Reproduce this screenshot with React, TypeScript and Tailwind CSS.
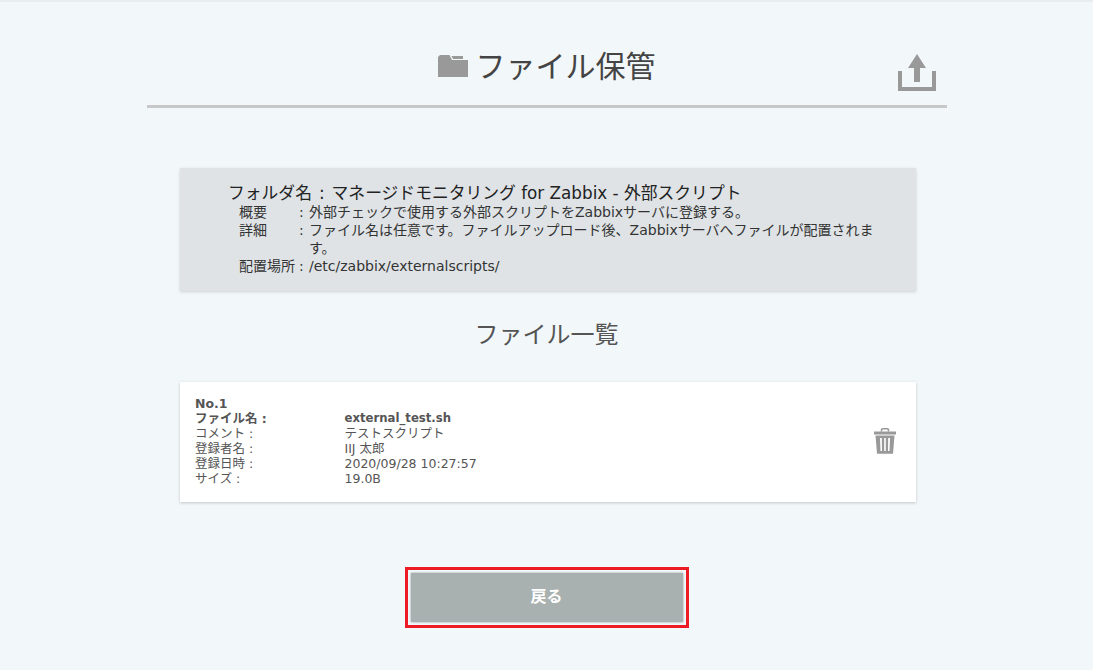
const font = "font-['DejaVu_Sans','Noto_Sans_CJK_JP',sans-serif]";

function Row({ label, value, bold }: { label: string; value: string; bold?: boolean }) {
  return (
    <div className={`flex h-[15px] leading-[15px] ${bold ? "font-bold" : ""}`}>
      <div className="w-[149.5px]">{label}</div>
      <div className={bold ? "text-[11.7px]" : ""}>{value}</div>
    </div>
  );
}

function Info({ label, value }: { label: string; value: string }) {
  return (
    <div className="flex leading-[18px]">
      <div className="w-[60px] shrink-0">{label}</div>
      <div className="w-[10px] shrink-0">:</div>
      <div className="flex-1">{value}</div>
    </div>
  );
}

export default function App() {
  return (
    <div className={`${font} relative h-[670px] w-full overflow-hidden bg-[#f2f7fa] text-[#444444]`}>
      <div className="h-[2px] bg-[#e9edf0]" />
      <div className="mx-auto w-[800px]">
        <header className="relative box-border flex h-[106px] items-start justify-center border-b-[3px] border-[#c8c8c8] pt-[42px]">
          <div className="flex items-center gap-[8px]">
            <svg width="30" height="22" viewBox="0 0 30 22" className="mt-[4px]">
              <path d="M0 22 V2 L2 0 H11.5 L14 5 H30 V22 Z M13.5 1 H25 V4 H15 Z" fill="#999999" />
            </svg>
            <h1 className="font-['Noto_Sans_CJK_JP',sans-serif] text-[30px] leading-[40px] font-normal text-[#444444]">ファイル保管</h1>
          </div>
          <svg width="38" height="38" viewBox="0 0 38 38" className="absolute top-[51px] right-[11px]">
            <path d="M19 1 L28 15 H22 V29 H16 V15 H10 Z" fill="#999999" />
            <path d="M2 18 V36 H36 V18" fill="none" stroke="#999999" strokeWidth="4" />
          </svg>
        </header>

        <section className="mt-[60px] ml-[33.5px] box-border h-[123px] w-[736px] bg-[#dfe3e6] pt-[15px] pr-[40px] pl-[48px] text-[14px] text-[#333333] shadow-[0_1px_3px_rgba(0,0,0,0.15)]">
          <div className="text-[16.8px] leading-[20px] text-[#222222]">
            フォルダ名<span className="mx-[7px]">:</span>マネージドモニタリング for Zabbix - 外部スクリプト
          </div>
          <div className="pl-[11px]">
            <Info label="概要" value="外部チェックで使用する外部スクリプトをZabbixサーバに登録する。" />
            <Info label="詳細" value="ファイル名は任意です。ファイルアップロード後、Zabbixサーバへファイルが配置されます。" />
            <Info label="配置場所" value="/etc/zabbix/externalscripts/" />
          </div>
        </section>

        <h2 className="mt-[23px] text-center font-['Noto_Sans_CJK_JP',sans-serif] text-[24px] leading-[38px] font-normal text-[#555555]">ファイル一覧</h2>

        <section className="mt-[30px] ml-[33.5px] flex h-[120px] w-[736px] items-center justify-between bg-white pr-[20px] pl-[15px] text-[12.5px] text-[#555555] shadow-[0_1px_3px_rgba(0,0,0,0.2)]">
          <div className="mt-[-2px]">
            <div className="h-[15px] leading-[15px] font-bold">No.1</div>
            <Row label="ファイル名 :" value="external_test.sh" bold />
            <Row label="コメント :" value="テストスクリプト" />
            <Row label="登録者名 :" value="IIJ 太郎" />
            <Row label="登録日時 :" value="2020/09/28 10:27:57" />
            <Row label="サイズ :" value="19.0B" />
          </div>
          <svg width="22" height="26" viewBox="0 0 22 26" className="mb-[3px]">
            <path d="M7.5 3.5 V2 C7.5 1.2 8 .8 8.8 .8 H13.2 C14 .8 14.5 1.2 14.5 2 V3.5" fill="none" stroke="#999999" strokeWidth="1.6" />
            <path d="M0 3.5 H22 V6.5 H0 Z" fill="#999999" />
            <path fillRule="evenodd" d="M1.5 7.5 H20.5 L19 25.8 H3 Z M6 10 L6.5 23 H8 L7.8 10 Z M10.2 10 V23 H11.8 V10 Z M14.2 10 L14 23 H15.5 L16 10 Z" fill="#999999" />
          </svg>
        </section>

        <div className="mt-[65px] flex justify-center">
          <div className="box-border flex h-[61px] w-[284px] items-center justify-center border-[3px] border-[#ed1c24] bg-[#f2f7fa]">
            <button className="h-[49px] w-[272px] bg-[#a9b0b0] pb-[2px] text-[16px] font-bold text-white shadow-[0_0_2px_rgba(0,0,0,0.4)]">戻る</button>
          </div>
        </div>
      </div>
    </div>
  );
}
